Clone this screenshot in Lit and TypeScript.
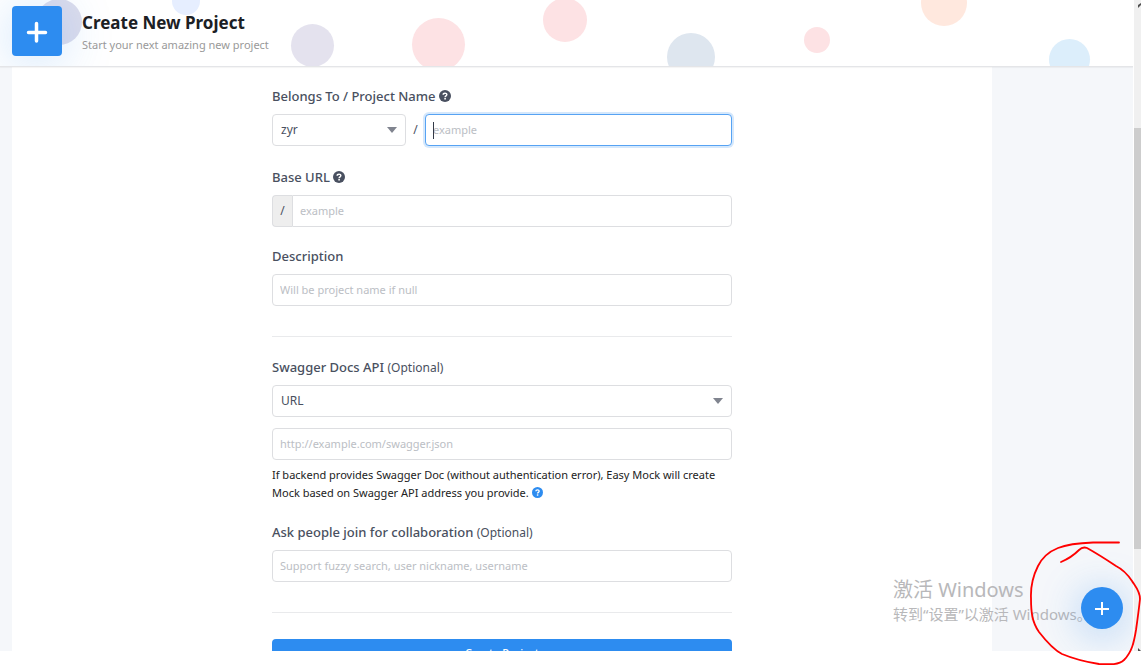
import { LitElement, html, css, svg } from "lit";
import { customElement, property } from "lit/decorators.js";

const bubbles = [
  { x: 59, y: 22, r: 23, fill: "#dcdcec" },
  { x: 186, y: 1, r: 14, fill: "#e6eeff" },
  { x: 312.5, y: 45.5, r: 21.5, fill: "#e4e2ee" },
  { x: 438.5, y: 44.5, r: 26.5, fill: "#fde2e4" },
  { x: 565, y: 20, r: 22, fill: "#fde2e4" },
  { x: 691, y: 57, r: 24, fill: "#dee6ef" },
  { x: 817, y: 40, r: 13, fill: "#fde2e4" },
  { x: 944, y: 3, r: 23, fill: "#ffe8de" },
  { x: 1069.5, y: 59.5, r: 20.5, fill: "#dceefb" },
];

@customElement("help-icon")
class HelpIcon extends LitElement {
  @property({ type: Number }) size = 12;

  static styles = css`
    :host {
      display: inline-block;
      vertical-align: -1px;
    }
    svg {
      display: block;
    }
  `;

  render() {
    return html`<svg width=${this.size} height=${this.size} viewBox="0 0 12 12" aria-hidden="true">
      <circle cx="6" cy="6" r="6" fill="currentColor" />
      <path d="M4.2 4.7C4.2 2.6 7.9 2.6 7.8 4.7C7.7 5.9 6.1 5.8 6.1 7.2" fill="none" stroke="#fff" stroke-width="1.5" />
      <rect x="5.3" y="8" width="1.6" height="1.5" fill="#fff" />
    </svg>`;
  }
}

@customElement("create-form")
class CreateForm extends LitElement {
  static styles = css`
    * {
      box-sizing: border-box;
    }
    :host {
      display: block;
      color: #495060;
      font-size: 12px;
    }
    .label {
      display: block;
      height: 20px;
      margin-bottom: 7px;
      font-size: 13px;
      font-weight: 500;
      line-height: 19px;
    }
    .optional {
      font-size: 12px;
      font-weight: 400;
    }
    .group {
      margin-bottom: 20px;
    }
    .control {
      display: block;
      width: 100%;
      height: 32px;
      padding: 0 7px 1px;
      border: 1px solid #dddee1;
      border-radius: 4px;
      background: #fff;
      color: #495060;
      font-family: inherit;
      font-size: 11px;
      outline: none;
    }
    .control::placeholder {
      color: #bbbec4;
      opacity: 1;
    }
    .row {
      display: flex;
      align-items: flex-start;
      height: 34px;
    }
    .owner {
      flex: 0 0 134px;
    }
    .slash {
      flex: 0 0 19px;
      line-height: 32px;
      text-align: center;
    }
    .name {
      position: relative;
      flex: 1;
    }
    .active {
      border-color: #57a3f3;
      box-shadow: 0 0 0 2px rgba(45, 140, 240, 0.2);
    }
    .caret {
      position: absolute;
      left: 8px;
      top: 8px;
      width: 1px;
      height: 17px;
      background: #333a48;
    }
    .picker {
      position: relative;
    }
    .select {
      appearance: none;
      padding: 0 24px 1px 8px;
      font-size: 12px;
    }
    .arrow {
      position: absolute;
      right: 9px;
      top: 13px;
      pointer-events: none;
    }
    .addon {
      display: flex;
    }
    .prefix {
      flex: 0 0 20px;
      border: 1px solid #dddee1;
      border-right: 0;
      border-radius: 4px 0 0 4px;
      background: #eee;
      line-height: 30px;
      text-align: center;
    }
    .joined {
      border-radius: 0 4px 4px 0;
    }
    .rule {
      height: 1px;
      margin: 30px 0 21px;
      border: 0;
      background: #e9eaec;
    }
    .last {
      margin-bottom: 26px;
    }
    .stack {
      margin-top: 11px;
    }
    .note {
      margin: 6px 0 21px;
      color: #222;
      font-size: 11px;
      line-height: 18px;
    }
    .link {
      color: #2d8cf0;
    }
    .submit {
      display: block;
      width: 100%;
      height: 32px;
      padding: 0 0 6px;
      border: 0;
      border-radius: 4px;
      background: #2d8cf0;
      color: #fff;
      font-family: inherit;
      font-size: 11px;
      font-weight: 500;
    }
  `;

  arrow() {
    return html`<svg class="arrow" width="10" height="6" viewBox="0 0 10 6" aria-hidden="true">
      <path d="M0 0H10L5 6Z" fill="#80848f" />
    </svg>`;
  }

  render() {
    return html`<form @submit=${(e: Event) => e.preventDefault()}>
      <div class="group">
        <label class="label" for="name">Belongs To / Project Name <help-icon></help-icon></label>
        <div class="row">
          <div class="picker owner">
            <select class="control select" aria-label="Belongs To"><option>zyr</option></select>
            ${this.arrow()}
          </div>
          <span class="slash">/</span>
          <div class="name">
            <input id="name" class="control active" placeholder="example" />
            <span class="caret"></span>
          </div>
        </div>
      </div>
      <div class="group">
        <label class="label" for="base">Base URL <help-icon></help-icon></label>
        <div class="addon">
          <span class="prefix">/</span>
          <input id="base" class="control joined" placeholder="example" />
        </div>
      </div>
      <label class="label" for="description">Description</label>
      <input id="description" class="control" placeholder="Will be project name if null" />
      <hr class="rule" />
      <label class="label" for="source">Swagger Docs API <span class="optional">(Optional)</span></label>
      <div class="picker">
        <select id="source" class="control select"><option>URL</option></select>
        ${this.arrow()}
      </div>
      <input class="control stack" aria-label="Swagger URL" placeholder="http://example.com/swagger.json" />
      <p class="note">
        If backend provides Swagger Doc (without authentication error), Easy Mock will create Mock based on Swagger API
        address you provide. <a class="link" href="#docs" aria-label="Help"><help-icon size="11"></help-icon></a>
      </p>
      <label class="label" for="members">Ask people join for collaboration <span class="optional">(Optional)</span></label>
      <input id="members" class="control" placeholder="Support fuzzy search, user nickname, username" />
      <hr class="rule last" />
      <button class="submit">Create Project</button>
    </form>`;
  }
}

@customElement("app-root")
class AppRoot extends LitElement {
  static styles = css`
    * {
      box-sizing: border-box;
    }
    :host {
      display: block;
      position: relative;
      box-sizing: border-box;
      height: 100vh;
      padding-bottom: 14px;
      overflow: hidden;
      background: #fff;
      font-family: "Noto Sans", "Noto Sans CJK SC", sans-serif;
      font-size: 12px;
    }
    .window {
      display: flex;
      gap: 1px;
      height: 100%;
    }
    .page {
      position: relative;
      display: flex;
      flex: 1;
      flex-direction: column;
      min-width: 0;
      overflow: hidden;
      background: #f5f7fa;
    }
    .header {
      position: relative;
      z-index: 1;
      display: flex;
      flex: 0 0 66px;
      gap: 20px;
      padding: 6px 12px;
      overflow: hidden;
      background: #fff;
    }
    .edge {
      position: relative;
      z-index: 1;
      flex: none;
      height: 1px;
      background: #e4e5e8;
      box-shadow: 0 1px 1px rgba(0, 0, 0, 0.05);
    }
    .bubbles {
      position: absolute;
      left: 0;
      top: 0;
      width: 100%;
      height: 100%;
    }
    .badge {
      position: relative;
      display: flex;
      align-items: center;
      justify-content: center;
      width: 50px;
      height: 50px;
      border-radius: 4px;
      background: #2d8cf0;
      box-shadow: 0 5px 50px rgba(45, 140, 240, 0.25);
    }
    .heading {
      position: relative;
      padding-top: 4px;
    }
    .title {
      margin: 0;
      color: #1c2024;
      font-size: 17px;
      font-weight: 700;
      line-height: 26px;
    }
    .subtitle {
      margin: 0;
      color: #999;
      font-size: 11px;
      line-height: 18px;
    }
    .card {
      flex: 1;
      width: calc(100% - 153px);
      min-height: 0;
      margin-left: 12px;
      padding: 20px 20px 0;
      background: #fff;
    }
    .form {
      max-width: 460px;
      margin: 0 auto;
    }
    .fab {
      position: absolute;
      right: 10px;
      bottom: 22px;
      display: flex;
      align-items: center;
      justify-content: center;
      width: 42px;
      height: 42px;
      padding: 0;
      border: 0;
      border-radius: 50%;
      background: #2d8cf0;
      box-shadow: 0 5px 40px rgba(45, 140, 240, 0.4);
    }
    .watermark {
      position: absolute;
      right: 44px;
      bottom: 26px;
      width: 196px;
      color: #b8b8ba;
      white-space: nowrap;
    }
    .mark-title {
      margin: 0;
      font-size: 20px;
      line-height: 26px;
    }
    .mark-text {
      margin: 0;
      font-size: 15px;
      line-height: 22px;
    }
    .track {
      display: flex;
      flex: 0 0 7px;
      flex-direction: column;
      overflow: hidden;
      background: #f0f0f0;
    }
    .tip {
      display: block;
      flex: none;
    }
    .before {
      flex: 111;
    }
    .thumb {
      flex: 421;
      background: #cdcdcd;
    }
    .after {
      flex: 85;
    }
    .scribble {
      position: absolute;
      right: 0;
      bottom: 0;
      pointer-events: none;
    }
  `;

  render() {
    return html`<div class="window">
        <main class="page">
          <header class="header">
            <svg class="bubbles" aria-hidden="true">
              ${bubbles.map((b) => svg`<circle cx=${b.x} cy=${b.y} r=${b.r} fill=${b.fill} />`)}
            </svg>
            <div class="badge">
              <svg width="24" height="24" viewBox="0 0 24 24" aria-hidden="true">
                <path d="M11.500 4.500V22M3.500 13.500H20.500" stroke="#fff" stroke-width="3.500" stroke-linecap="round" />
              </svg>
            </div>
            <div class="heading">
              <h1 class="title">Create New Project</h1>
              <p class="subtitle">Start your next amazing new project</p>
            </div>
          </header>
          <div class="edge"></div>
          <section class="card"><create-form class="form"></create-form></section>
          <div class="watermark">
            <p class="mark-title">激活 Windows</p>
            <p class="mark-text">转到“设置”以激活 Windows。</p>
          </div>
          <button class="fab" aria-label="Add">
            <svg width="14" height="14" viewBox="0 0 14 14" aria-hidden="true">
              <path d="M7 1V14M0 8H14" stroke="#fff" stroke-width="2" />
            </svg>
          </button>
        </main>
        <div class="track">
          <svg class="tip" width="7" height="17" viewBox="0 0 7 17" aria-hidden="true">
            <path d="M4 8L7 5V3L4 5Z" fill="#505050" />
          </svg>
          <div class="before"></div>
          <div class="thumb"></div>
          <div class="after"></div>
          <svg class="tip" width="7" height="17" viewBox="0 0 7 17" aria-hidden="true">
            <path d="M4 14L7 17H4Z" fill="#505050" />
          </svg>
        </div>
      </div>
      <svg class="scribble" width="121" height="135" viewBox="0 0 121 135" aria-hidden="true">
        <path
          d="M99 12.5H73C60 13 48 14 38 18C28 22 22 28 18 36C13 46 10.500 56 11 68C11 82 12 92 19 102C26 111 34 120 42 124C54 129 66 132 79 134C90 134.500 99 135 104 130C112 122 114 112 116 100C118 86 119 78 120 69C120 61 115 56 112 51C106 42 102 39 96 36C87 30 76 23 67 18C63 16.500 61 18 59 20C54 25 48 29 41 32"
          fill="none"
          stroke="#f00"
          stroke-width="1.800"
          stroke-linecap="round"
        />
      </svg>`;
  }
}
